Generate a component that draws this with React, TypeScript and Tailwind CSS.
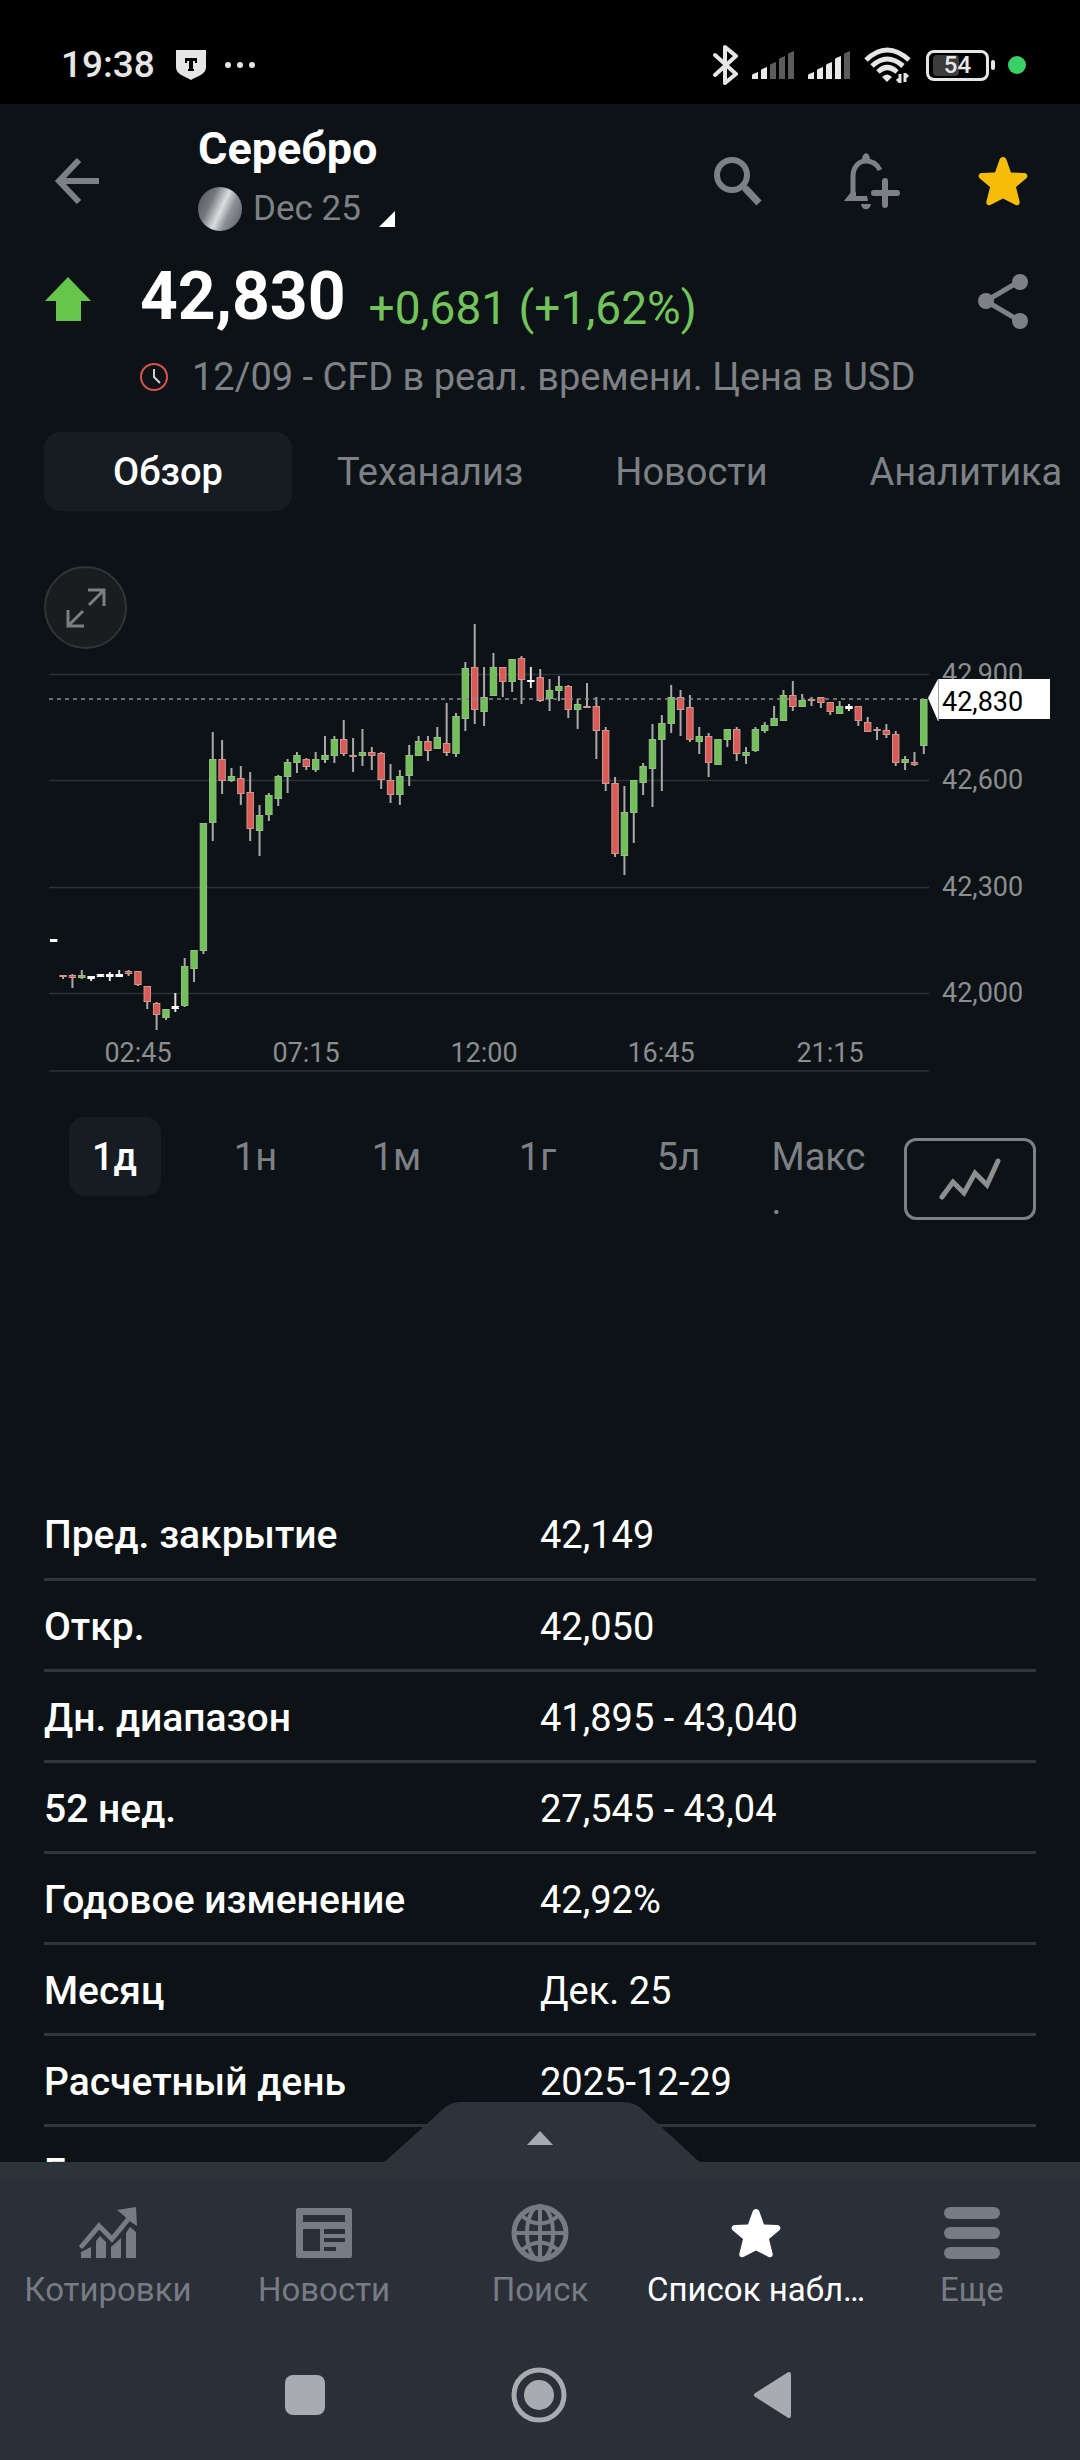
import type { ReactNode } from "react";

// [high, body top, body bottom, low, color] in plot units
type Candle = [number, number, number, number, "g" | "r" | "w"];

const CANDLES: Candle[] = [
  [339, 339, 342, 342, "w"],
  [375, 375, 377, 379, "r"],
  [374, 375, 378, 388, "r"],
  [370, 375, 378, 379, "g"],
  [376, 376, 379, 381, "w"],
  [374, 374, 377, 377, "w"],
  [372, 374, 377, 381, "w"],
  [370, 374, 377, 377, "w"],
  [370, 371, 374, 376, "r"],
  [371, 371, 385, 386, "r"],
  [386, 386, 402, 409, "r"],
  [402, 403, 415, 430, "r"],
  [409, 409, 418, 420, "g"],
  [393, 406, 409, 412, "w"],
  [358, 366, 406, 407, "g"],
  [350, 350, 369, 382, "g"],
  [223, 223, 351, 354, "g"],
  [132, 159, 223, 241, "g"],
  [140, 159, 181, 194, "r"],
  [168, 176, 181, 182, "g"],
  [166, 178, 194, 205, "r"],
  [172, 192, 229, 241, "r"],
  [205, 215, 231, 256, "g"],
  [193, 195, 215, 221, "g"],
  [175, 176, 199, 206, "g"],
  [159, 162, 177, 193, "g"],
  [152, 155, 163, 173, "g"],
  [158, 159, 167, 170, "r"],
  [152, 159, 170, 172, "g"],
  [136, 155, 160, 163, "g"],
  [136, 139, 156, 163, "g"],
  [120, 139, 154, 156, "r"],
  [138, 155, 157, 172, "r"],
  [129, 152, 156, 166, "g"],
  [147, 152, 156, 170, "r"],
  [152, 153, 180, 189, "r"],
  [164, 180, 195, 203, "r"],
  [170, 176, 195, 205, "g"],
  [145, 155, 176, 186, "g"],
  [136, 141, 156, 156, "g"],
  [136, 141, 151, 161, "r"],
  [127, 137, 149, 149, "g"],
  [103, 143, 153, 156, "r"],
  [113, 116, 154, 157, "g"],
  [62, 68, 119, 131, "g"],
  [24, 67, 110, 124, "r"],
  [67, 97, 112, 126, "g"],
  [53, 67, 96, 96, "g"],
  [67, 67, 82, 97, "r"],
  [59, 59, 82, 92, "g"],
  [56, 58, 80, 104, "r"],
  [67, 80, 82, 88, "w"],
  [69, 77, 101, 102, "r"],
  [79, 90, 99, 111, "g"],
  [76, 86, 91, 101, "g"],
  [85, 86, 110, 118, "r"],
  [99, 104, 110, 129, "g"],
  [83, 106, 108, 108, "r"],
  [97, 106, 131, 159, "r"],
  [127, 130, 184, 191, "r"],
  [177, 183, 254, 257, "r"],
  [186, 212, 256, 275, "g"],
  [180, 180, 213, 243, "g"],
  [163, 166, 183, 195, "g"],
  [124, 139, 169, 207, "g"],
  [115, 123, 140, 191, "g"],
  [85, 97, 124, 133, "g"],
  [90, 97, 110, 136, "r"],
  [95, 107, 140, 142, "r"],
  [127, 136, 142, 154, "g"],
  [133, 136, 163, 177, "r"],
  [139, 139, 165, 165, "g"],
  [129, 129, 140, 147, "g"],
  [127, 129, 154, 161, "r"],
  [147, 152, 156, 164, "g"],
  [127, 129, 151, 152, "g"],
  [122, 125, 131, 133, "g"],
  [106, 118, 126, 126, "g"],
  [90, 95, 121, 121, "g"],
  [81, 95, 107, 111, "r"],
  [94, 100, 107, 107, "g"],
  [97, 99, 101, 106, "r"],
  [97, 97, 103, 108, "r"],
  [102, 102, 112, 115, "r"],
  [101, 106, 114, 114, "g"],
  [104, 106, 109, 111, "w"],
  [106, 106, 121, 126, "r"],
  [117, 122, 132, 132, "r"],
  [127, 129, 131, 140, "r"],
  [124, 130, 135, 138, "r"],
  [131, 134, 163, 166, "r"],
  [156, 159, 163, 170, "g"],
  [152, 162, 165, 166, "r"],
  [99, 99, 146, 154, "g"],
];

const FILLS = { g: "#72c158", r: "#dc5a55", w: "#ffffff" };
const STROKES = { g: "#94bd88", r: "#d09692", w: "#ffffff" };

const PRICE_LEVELS = [
  { label: "42,900", y: 74 },
  { label: "42,600", y: 180 },
  { label: "42,300", y: 287 },
  { label: "42,000", y: 393 },
];

const TIME_LABELS = [
  { label: "02:45", x: 138 },
  { label: "07:15", x: 306 },
  { label: "12:00", x: 484 },
  { label: "16:45", x: 661 },
  { label: "21:15", x: 830 },
];

const RANGES = ["1д", "1н", "1м", "1г", "5л", "Макс."];

const DETAILS = [
  { name: "Пред. закрытие", value: "42,149" },
  { name: "Откр.", value: "42,050" },
  { name: "Дн. диапазон", value: "41,895 - 43,040" },
  { name: "52 нед.", value: "27,545 - 43,04" },
  { name: "Годовое изменение", value: "42,92%" },
  { name: "Месяц", value: "Дек. 25" },
  { name: "Расчетный день", value: "2025-12-29" },
  { name: "Группа", value: "" },
];

const STAR_PATH =
  "M25 1c1.600 0 2.900 1 3.400 2.600L33 16.500l13.200.4c3.300.2 4.300 3.600 1.900 5.600L38 31l3.600 14.500c.7 3-2 4.700-4.400 3.200L25 42.500l-12.200 6.200c-2.400 1.500-5.100-.2-4.400-3.200L12 31 1.900 22.500c-2.400-2-1.400-5.400 1.900-5.600l13.200-.4 4.600-12.900c.5-1.600 1.800-2.600 3.400-2.600z";

function SignalIcon({ level }: { level: number }) {
  return (
    <svg width="44" height="30" viewBox="0 0 44 30">
      {[22, 17, 12, 6, 1].map((top, i) => (
        <path
          key={top}
          d={`M${i * 9 + 1} ${top + 2}l5-2V29h-6V${top + 3}z`}
          fill={i < level ? "#e8e8e8" : "#5c5c5c"}
        />
      ))}
    </svg>
  );
}

function StatusBar() {
  return (
    <div className="flex h-[104px] shrink-0 items-center bg-black pt-[26px] pr-[54px] pl-[61px] text-[#e6e6e6]">
      <span className="text-[37px] leading-10 font-medium">19:38</span>
      <svg className="ml-[21px]" width="30" height="30" viewBox="0 0 30 30">
        <path d="M0 0h30v17c0 7-8 9-15 13C8 26 0 24 0 17z" fill="#e6e6e6" />
        <path d="M9 8h12v5h-2v-2h-2v8h1v2h-6v-2h1v-8h-2v2H9z" fill="#000" />
      </svg>
      <svg className="ml-[18px]" width="32" height="8" viewBox="0 0 32 8">
        <circle cx="4" cy="4" r="3" fill="#e6e6e6" />
        <circle cx="16" cy="4" r="3" fill="#e6e6e6" />
        <circle cx="28" cy="4" r="3" fill="#e6e6e6" />
      </svg>
      <div className="ml-auto flex items-center">
        <svg width="26" height="40" viewBox="0 0 26 40" fill="none">
          <path
            d="M2 10l21 19-11 9V2l11 9L2 30"
            stroke="#e6e6e6"
            strokeWidth="4"
            strokeLinejoin="round"
            strokeLinecap="round"
          />
        </svg>
        <div className="ml-[13px] flex gap-3">
          <SignalIcon level={2} />
          <SignalIcon level={4} />
        </div>
        <svg className="ml-3" width="48" height="36" viewBox="0 0 48 36" fill="none">
          <g stroke="#e6e6e6" strokeWidth="5">
            <path d="M2 13Q23-7 45 13" />
            <path d="M8 19Q23 5 39 19" />
            <path d="M14 25Q23 16 33 25" />
          </g>
          <path d="M18 30q5-5 10 0l-5 5z" fill="#e6e6e6" />
          <path d="M36 27v9M33 32l3 3M41 35v-9M44 30l-3-3" stroke="#e6e6e6" strokeWidth="3" />
        </svg>
        <div className="ml-3.5 flex items-center">
          <div className="relative flex h-[31px] w-[63px] items-center justify-center rounded-lg border-[3px] border-[#e6e6e6]">
            <div className="absolute top-0.5 bottom-0.5 left-1 w-[26px] rounded-sm bg-[#3c3c3c]" />
            <span className="relative text-2xl leading-6 font-medium">54</span>
          </div>
          <div className="ml-0.5 h-2.5 w-1 rounded-sm bg-[#e6e6e6]" />
        </div>
        <div className="ml-[13px] size-[18px] rounded-full bg-[#3ad068]" />
      </div>
    </div>
  );
}

function Toolbar() {
  return (
    <header className="flex h-[147px] items-center pr-[52px] pl-[54px]">
      <button type="button" aria-label="Назад" className="pt-1.5">
        <svg width="46" height="46" viewBox="0 0 46 46" fill="none" stroke="#7d8186" strokeWidth="6">
          <path d="M45 23H6M25 2L5 23l20 21" />
        </svg>
      </button>
      <div className="ml-[98px] flex flex-col gap-3.5">
        <h1 className="text-[45px] leading-12 font-bold text-white">Серебро</h1>
        <button type="button" className="flex items-center">
          <span className="size-11 rounded-full bg-linear-[115deg,#5d6065_12%,#74777b_30%,#dcdde0_52%,#8f9096_68%,#66666f_90%]" />
          <span className="ml-[11px] text-[35px] leading-11 text-[#7d8186]">Dec 25</span>
          <svg className="mt-5 ml-[18px]" width="16" height="16" viewBox="0 0 16 16">
            <path d="M16 0v16H0z" fill="#fff" />
          </svg>
        </button>
      </div>
      <div className="ml-auto flex items-center pt-1.5">
        <button type="button" aria-label="Поиск инструмента">
          <svg width="50" height="50" viewBox="0 0 50 50" fill="none" stroke="#7d8186">
            <circle cx="19" cy="19" r="15" strokeWidth="6" />
            <path d="M30 30l3 3" strokeWidth="5" />
            <path d="M32 32l14 15" strokeWidth="7" />
          </svg>
        </button>
        <button type="button" aria-label="Создать оповещение" className="ml-20">
          <svg width="58" height="58" viewBox="0 0 58 58" fill="none">
            <path
              d="M10 44V24c0-9 6-15 13-15 6 0 11 3 14 9"
              stroke="#7d8186"
              strokeWidth="5"
            />
            <path d="M19 8c0-9 8-9 8 0zM1 49l7-9h5v4h11l1 5zM18 52h10c-1 7-9 7-10 0z" fill="#7d8186" />
            <path d="M42 29v24M31 41h23" stroke="#7d8186" strokeWidth="6" strokeLinecap="round" />
          </svg>
        </button>
        <button type="button" aria-label="В списке наблюдения" className="ml-[77px]">
          <svg width="50" height="50" viewBox="0 0 50 50">
            <path d={STAR_PATH} fill="#f5bd0a" />
          </svg>
        </button>
      </div>
    </header>
  );
}

function PriceSummary() {
  return (
    <section>
      <div className="flex h-[92px] items-center pr-[52px] pl-[45px]">
        <svg className="mt-1" width="46" height="44" viewBox="0 0 46 44">
          <path d="M23 0l23 24H36v20H11V24H0z" fill="#66c54b" />
        </svg>
        <span className="ml-[49px] text-[66px] leading-[76px] font-bold text-white">42,830</span>
        <span className="ml-[23px] pt-[22px] text-[46px] leading-[54px] text-[#72c35c]">
          +0,681 (+1,62%)
        </span>
        <button type="button" aria-label="Поделиться" className="ml-auto pt-2">
          <svg width="50" height="56" viewBox="0 0 50 56" fill="#7d8186">
            <path d="M42 8L8 28l34 20" fill="none" stroke="#7d8186" strokeWidth="5" />
            <circle cx="42" cy="9" r="8" />
            <circle cx="8" cy="28" r="8" />
            <circle cx="42" cy="48" r="8" />
          </svg>
        </button>
      </div>
      <div className="flex items-center pt-3 pl-[139px]">
        <svg width="30" height="30" viewBox="0 0 30 30" fill="none">
          <circle cx="15" cy="15" r="13" stroke="#d8534e" strokeWidth="2" />
          <path d="M15 7v8l6 6" stroke="#d0d0d0" strokeWidth="2" />
        </svg>
        <p className="ml-[23px] text-[38px] leading-11 text-[#7d8186]">
          12/09 - CFD в реал. времени. Цена в USD
        </p>
      </div>
    </section>
  );
}

function SectionTabs() {
  return (
    <nav className="mt-[33px] flex h-[79px] items-stretch overflow-hidden pl-11 text-[38px] leading-11 whitespace-nowrap text-[#7d8186]">
      <button type="button" className="w-[248px] rounded-2xl bg-[#171c23] font-medium text-white">
        Обзор
      </button>
      <button type="button" className="ml-[45px]">Теханализ</button>
      <button type="button" className="ml-[92px]">Новости</button>
      <button type="button" className="ml-[102px]">Аналитика</button>
    </nav>
  );
}

function PriceChart() {
  return (
    <section className="relative mt-[49px]">
      <svg className="block h-auto w-full" viewBox="0 0 1080 520">
        <g transform="translate(0 40)" fontSize="27" fill="#8b8d90">
          {PRICE_LEVELS.map((level) => (
            <g key={level.label}>
              <path d={`M49 ${level.y}.500H929`} stroke="#2d3235" strokeWidth="1.500" />
              <text x="942" y={level.y + 9}>{level.label}</text>
            </g>
          ))}
          <path d="M49 471H929" stroke="#23292c" strokeWidth="2" />
          {TIME_LABELS.map((time) => (
            <text key={time.label} x={time.x} y="462" textAnchor="middle">
              {time.label}
            </text>
          ))}
          {CANDLES.map(([high, top, bottom, low, color], i) => {
            const x = 53.7 + i * 9.356;
            return (
              <g key={i}>
                <path
                  d={`M${x} ${high}V${low}`}
                  stroke={color === "w" ? "#e0e0e0" : "#a9a9a9"}
                  strokeWidth="2"
                />
                <rect
                  x={x - 3.2}
                  y={top + 0.5}
                  width="6.4"
                  height={Math.max(bottom - top - 1, 1)}
                  fill={FILLS[color]}
                  stroke={STROKES[color]}
                />
              </g>
            );
          })}
          <path d="M49 99H924" stroke="#8a8d8f" strokeWidth="1.500" strokeDasharray="4 4" />
          {/* Last price tag */}
          <path d="M928 98l10-19h112v40H938v2z" fill="#fff" />
          <path d="M938.500 79v42" stroke="#9aa0a3" />
          <text x="942" y="111" fill="#000">42,830</text>
        </g>
      </svg>
      <button
        type="button"
        aria-label="Развернуть график"
        className="absolute top-1.5 left-11 flex size-[83px] items-center justify-center rounded-full border-2 border-[#303538] bg-[#191d20]"
      >
        <svg width="40" height="40" viewBox="0 0 40 40" fill="none" stroke="#7c7f81" strokeWidth="3">
          <path d="M22 2h16v16M37 3L23 17M2 22v16h16M3 37l14-14" />
        </svg>
      </button>
    </section>
  );
}

function RangePicker() {
  return (
    <section className="mt-[37px] flex items-start pr-11 pl-11">
      <div className="grid flex-1 grid-cols-6 items-start justify-items-center text-[38px] leading-11 text-[#7d8186]">
        {RANGES.map((range, i) => (
          <button
            key={range}
            type="button"
            className={
              i === 0
                ? "w-[92px] rounded-2xl bg-[#171c23] pt-[18px] pb-[17px] font-medium text-white"
                : "w-24 pt-[18px] pb-[17px] wrap-anywhere last:text-left"
            }
          >
            {range}
          </button>
        ))}
      </div>
      <button
        type="button"
        aria-label="Тип графика"
        className="mt-[21px] ml-3.5 flex h-[82px] w-[132px] items-center justify-center rounded-xl border-[3px] border-[#7d8186]"
      >
        <svg width="62" height="42" viewBox="0 0 62 42" fill="none">
          <path
            d="M3 39l11-15 11 11 11-20 12 12L59 3"
            stroke="#8e8e8e"
            strokeWidth="5"
            strokeLinecap="round"
          />
        </svg>
      </button>
    </section>
  );
}

function DetailsTable() {
  return (
    <div className="mt-[248px] px-11">
      <table className="w-full table-fixed text-left leading-11 text-white">
        <tbody>
          {DETAILS.map((row) => (
            <tr key={row.name} className="h-[91px] border-b-[3px] border-[#31363a]">
              <th scope="row" className="pt-1 text-[39px] font-medium">{row.name}</th>
              <td className="pt-1 text-[38px]">{row.value}</td>
            </tr>
          ))}
        </tbody>
      </table>
    </div>
  );
}

function NavItem({ label, active, children }: { label: string; active?: boolean; children: ReactNode }) {
  return (
    <a
      href="#"
      aria-current={active ? "page" : undefined}
      className={`flex flex-col items-center gap-2 ${active ? "text-white" : "text-[#777b84]"}`}
    >
      <svg width="58" height="58" viewBox="0 0 58 58" fill="currentColor">
        {children}
      </svg>
      <span className="text-[33px] leading-10 whitespace-nowrap">{label}</span>
    </a>
  );
}

function BottomNav() {
  return (
    <footer className="relative shrink-0 bg-[#2a2f38]">
      {/* Pull-up handle */}
      <button
        type="button"
        aria-label="Развернуть панель"
        className="absolute bottom-full left-1/2 -translate-x-1/2"
      >
        <svg className="block" width="330" height="60" viewBox="0 0 330 60">
          <path
            d="M6 60c4 0 6-2 9-5L66 9C72 3 78 0 86 0h161c9 0 16 3 22 9l50 46c3 3 5 5 9 5z"
            fill="#2c333b"
          />
          <path d="M152 43l13-14 13 14z" fill="#a8acb0" />
        </svg>
      </button>
      <div className="h-[18px] bg-[#2c343a]" />
      <nav className="grid h-[150px] grid-cols-5 pt-6">
        <NavItem label="Котировки">
          <path d="M2 54V48l10-5v11zM17 54V37l4-5 6 6v16zM32 54V43l10-9v20zM47 54V29l4-6 6 5v26z" />
          <path d="M3 42l17-20 13 13 18-22" fill="none" stroke="currentColor" strokeWidth="5" strokeLinecap="round" />
          <path d="M38 6l19-3 1 19-6-4-8-7z" />
        </NavItem>
        <NavItem label="Новости">
          <path
            fillRule="evenodd"
            d="M3 4h52q2 0 2 2v46q0 2-2 2H3q-2 0-2-2V6q0-2 2-2zM8 11v7h42v-7zM8 25v22h17V25zM29 25v5h21v-5zM29 34v4h21v-4zM29 43v4h12v-4z"
          />
        </NavItem>
        <NavItem label="Поиск">
          <g fill="none" stroke="currentColor" strokeWidth="4">
            <circle cx="29" cy="29" r="26" strokeWidth="5" />
            <ellipse cx="29" cy="29" rx="13" ry="27" />
            <path d="M29 3v52M3 29h52M11 12q18 15 36 0M11 46q18-15 36 0" />
          </g>
        </NavItem>
        <NavItem label="Список набл…" active>
          <path d={STAR_PATH} transform="translate(4 4)" />
        </NavItem>
        <NavItem label="Еще">
          <rect x="1" y="3" width="56" height="12" rx="6" />
          <rect x="1" y="23" width="56" height="12" rx="6" />
          <rect x="1" y="43" width="56" height="12" rx="6" />
        </NavItem>
      </nav>
      {/* System buttons */}
      <div className="flex h-[130px] items-center justify-center gap-[184px] pr-0.5">
        <button type="button" aria-label="Недавние" className="flex w-[50px] justify-center">
          <span className="size-10 rounded-lg bg-[#a8acb0]" />
        </button>
        <button type="button" aria-label="Домой">
          <svg className="-mx-1" width="58" height="58" viewBox="0 0 58 58">
            <circle cx="29" cy="29" r="25" fill="none" stroke="#a8acb0" strokeWidth="5" />
            <circle cx="29" cy="29" r="15" fill="#a8acb0" />
          </svg>
        </button>
        <button type="button" aria-label="Назад в системе">
          <svg width="50" height="50" viewBox="0 0 50 50">
            <path
              d="M8 25L41 4v42z"
              fill="#a8acb0"
              stroke="#a8acb0"
              strokeWidth="4"
              strokeLinejoin="round"
            />
          </svg>
        </button>
      </div>
    </footer>
  );
}

export default function App() {
  return (
    <div className="flex h-screen flex-col overflow-hidden bg-[#0d1216] font-[Roboto,sans-serif]">
      <StatusBar />
      <main className="min-h-0 flex-1 overflow-hidden">
        <Toolbar />
        <PriceSummary />
        <SectionTabs />
        <PriceChart />
        <RangePicker />
        <DetailsTable />
      </main>
      <BottomNav />
    </div>
  );
}
